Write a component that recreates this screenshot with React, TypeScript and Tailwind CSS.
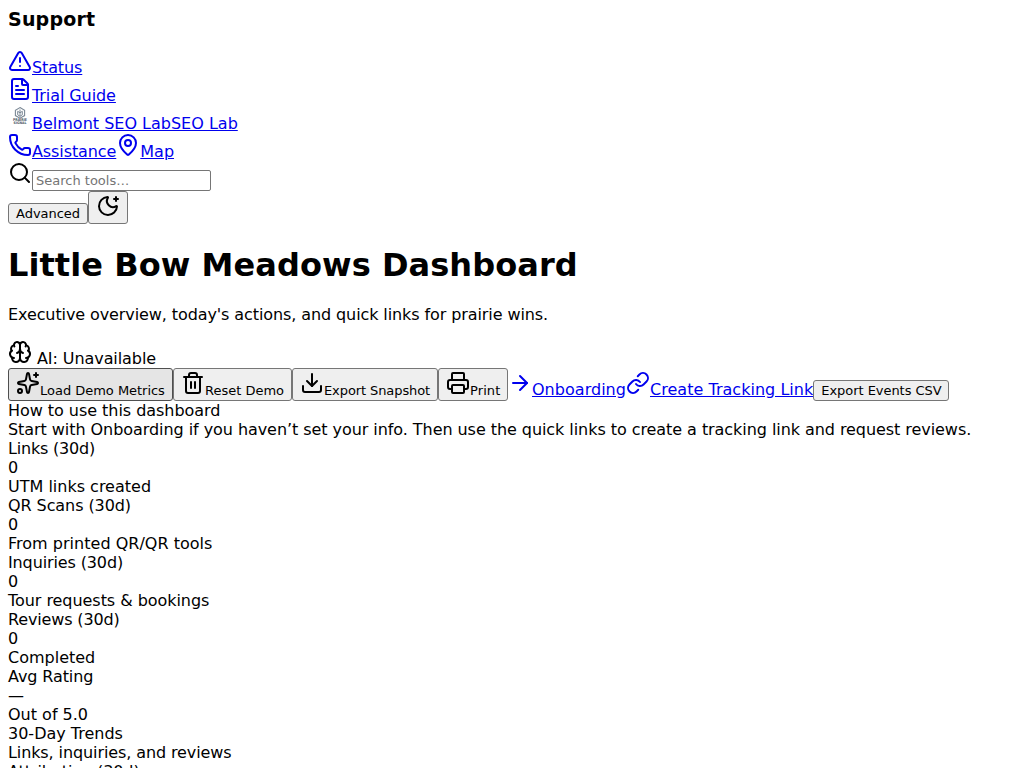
import type { ReactNode } from "react";
import {
  ArrowRight,
  Brain,
  Download,
  FileText,
  Link as LinkIcon,
  MapPin,
  MoonStar,
  Phone,
  Printer,
  Search,
  Sparkles,
  Trash2,
  TriangleAlert,
} from "lucide-react";
import clsx from "clsx";

const icon = "inline align-baseline";

function TextLink({ children, className }: { children: ReactNode; className?: string }) {
  return (
    <a href="#" className={clsx("text-[#0000ee] underline", className)}>
      {children}
    </a>
  );
}

function Button({ children, active = false, className }: { children: ReactNode; active?: boolean; className?: string }) {
  return (
    <button
      className={clsx(
        "rounded-[3px] border px-[7px] py-[2px] text-[13px] leading-[15px]",
        active ? "border-[#4f4f4f] bg-[#e5e5e5]" : "border-[#767676] bg-[#efefef]",
        className,
      )}
    >
      {children}
    </button>
  );
}

function SignalLogo() {
  return (
    <svg className={icon} width="24" height="24" viewBox="0 0 24 24" fill="none">
      <path d="M12 2.6l4.6 2.6v5.4L12 13.2l-4.6-2.6V5.2z" stroke="#7b8895" strokeWidth="1.1" />
      <path d="M12 4.5v7M9.7 6.3v3.5l2.3 1.5 2.3-1.5V6.3L12 7.8z" stroke="#7b8895" strokeWidth="1" />
      <text x="12" y="16.4" textAnchor="middle" textLength="14" lengthAdjust="spacingAndGlyphs" fontSize="3.8" fontWeight="700" fill="#4b5563">
        PRAIRIE
      </text>
      <text x="12" y="19.4" textAnchor="middle" textLength="13" lengthAdjust="spacingAndGlyphs" fontSize="3.4" fontWeight="700" fill="#4b5563">
        SIGNAL
      </text>
    </svg>
  );
}

const metrics = [
  { label: "Links (30d)", value: "0", note: "UTM links created", labelClass: "tracking-[-0.2px]", noteClass: "" },
  { label: "QR Scans (30d)", value: "0", note: "From printed QR/QR tools", labelClass: "tracking-[-0.08px]", noteClass: "tracking-[0.02px]" },
  { label: "Inquiries (30d)", value: "0", note: "Tour requests & bookings", labelClass: "tracking-[-0.12px]", noteClass: "tracking-[-0.05px]" },
  { label: "Reviews (30d)", value: "0", note: "Completed", labelClass: "tracking-[-0.15px]", noteClass: "" },
  { label: "Avg Rating", value: "—", note: "Out of 5.0", labelClass: "tracking-[-0.1px]", noteClass: "" },
];

export default function App() {
  return (
    <div className="h-screen overflow-hidden bg-white p-2 font-['DejaVu_Sans',sans-serif] text-base leading-[normal] text-black">
      <h3 className="mb-[18px] text-[19px] leading-[23px] font-bold tracking-[0.2px]">Support</h3>
      <div>
        <TextLink className="tracking-[-0.12px]"><TriangleAlert className={icon} />Status</TextLink>
      </div>
      <div>
        <TextLink className="tracking-[-0.08px]"><FileText className={icon} />Trial Guide</TextLink>
      </div>
      <div>
        <TextLink><SignalLogo />Belmont SEO LabSEO Lab</TextLink>
      </div>
      <div>
        <TextLink className="tracking-[-0.1px]"><Phone className={icon} />Assistance</TextLink>
        <TextLink><MapPin className={icon} />Map</TextLink>
      </div>
      <div>
        <Search className={icon} />
        <input
          placeholder="Search tools…"
          className="h-[21px] w-[179px] rounded-[2px] border border-[#767676] bg-white px-[3px] py-[2px] text-[13px] leading-[15px] placeholder:text-[#757575]"
        />
      </div>
      <div>
        <Button className="w-20 tracking-[-0.05px]">Advanced</Button>
        <Button><MoonStar className={icon} /></Button>
      </div>
      <h1 className="mt-[22.44px] mb-[20.44px] text-[32px] leading-[normal] font-bold tracking-[0.07px]">Little Bow Meadows Dashboard</h1>
      <p className="my-4 tracking-[-0.095px]">Executive overview, today's actions, and quick links for prairie wins.</p>
      <div className="tracking-[-0.08px]">
        <Brain className={icon} /> AI: Unavailable
      </div>
      <div className="whitespace-nowrap">
        <Button active className="w-[165px] tracking-[-0.03px]"><Sparkles className={icon} />Load Demo Metrics</Button>
        <Button className="w-[119px]"><Trash2 className={icon} />Reset Demo</Button>
        <Button className="w-[146px] tracking-[-0.09px]"><Download className={icon} />Export Snapshot</Button>
        <Button className="w-[70px] tracking-[0.1px]"><Printer className={icon} />Print</Button>
        <TextLink className="tracking-[0.03px]"><ArrowRight className={icon} />Onboarding</TextLink>
        <TextLink className="tracking-[0.03px]"><LinkIcon className={icon} />Create Tracking Link</TextLink>
        <Button className="w-[136px] tracking-[-0.05px]">Export Events CSV</Button>
      </div>
      <div className="tracking-[-0.04px]">How to use this dashboard</div>
      <div className="tracking-[-0.06px]">Start with Onboarding if you haven’t set your info. Then use the quick links to create a tracking link and request reviews.</div>
      {metrics.map(({ label, value, note, labelClass, noteClass }) => (
        <div key={label}>
          <div className={labelClass}>{label}</div>
          <div>{value}</div>
          <div className={noteClass}>{note}</div>
        </div>
      ))}
      <div>30-Day Trends</div>
      <div className="tracking-[-0.1px]">Links, inquiries, and reviews</div>
      <div className="tracking-[-0.1px]">Attribution (30d)</div>
    </div>
  );
}
